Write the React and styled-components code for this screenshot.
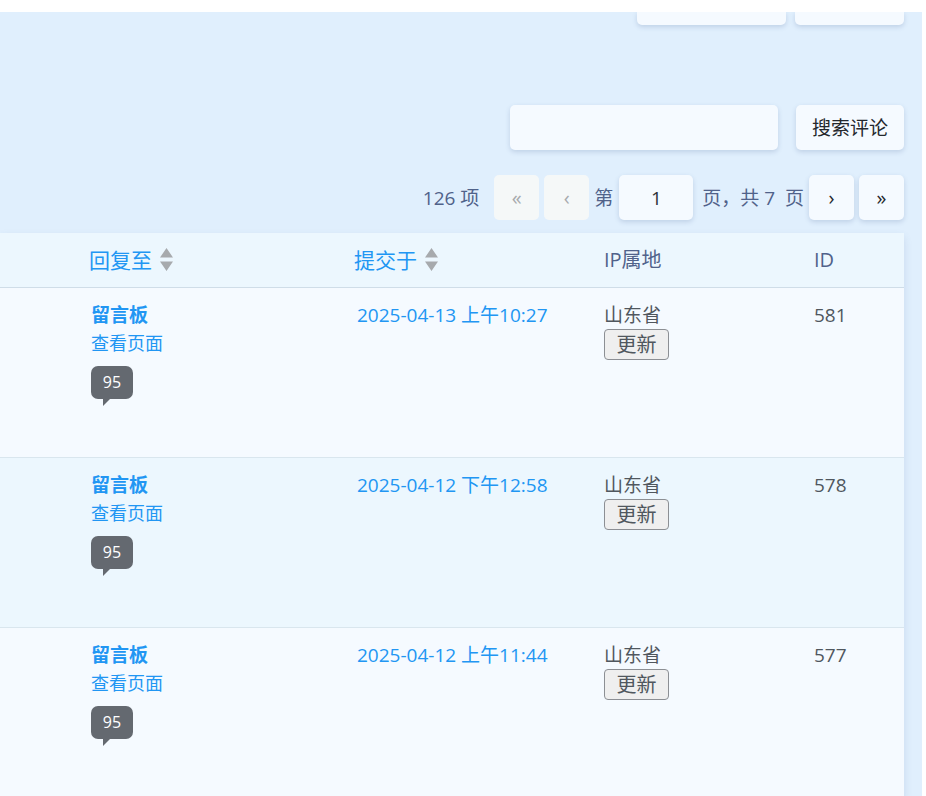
import React from "react";
import styled, { createGlobalStyle } from "styled-components";

const GlobalStyle = createGlobalStyle`
  *, *::before, *::after { box-sizing: border-box; }
  body {
    margin: 0;
    background: #fff;
    color: #50575e;
    font-family: "Open Sans", "Noto Sans CJK SC", sans-serif;
    font-size: 19px;
    line-height: 28px;
  }
  button, input { font: inherit; color: inherit; }
`;

const Page = styled.main`
  margin: 12px 4px 0 0;
  padding-right: 18px;
  min-height: calc(100vh - 12px);
  max-height: calc(100vh - 12px);
  overflow: hidden;
  background: #e0effd;
`;

const Toolbar = styled.div`
  display: flex;
  justify-content: flex-end;
  gap: ${(p) => p.$gap}px;
  margin-bottom: ${(p) => p.$after}px;
`;

const surface = `
  border: 0;
  border-radius: 5px;
  background: #f5faff;
  box-shadow: 0 2px 5px rgba(60, 90, 140, 0.2);
`;

const ScreenTab = styled.button`
  ${surface}
  width: ${(p) => p.$width}px;
  height: 13px;
  border-radius: 0 0 5px 5px;
`;

const SearchInput = styled.input`
  ${surface}
  width: 268px;
  height: 45px;
  padding: 0 12px;
`;

const SearchButton = styled.button`
  ${surface}
  width: 108px;
  height: 45px;
  padding: 0;
  color: #24282d;
`;

const Pager = styled.nav`
  display: flex;
  justify-content: flex-end;
  align-items: center;
  gap: 5px;
  height: 45px;
  margin-bottom: 13px;
  color: #50628a;
`;

const Total = styled.span`
  margin-right: 10px;
`;

const PageButton = styled.button`
  ${surface}
  width: 45px;
  height: 45px;
  padding: 0;
  color: #24282d;
  font-size: 20px;
  &:disabled {
    color: #a7aaad;
    background: #f5f8f8;
    box-shadow: none;
  }
`;

const PageLabel = styled.label`
  width: 20px;
`;

const PageInput = styled.input`
  ${surface}
  width: 74px;
  height: 45px;
  padding: 0;
  text-align: center;
  color: #2c3338;
`;

const PageCount = styled.span`
  padding-left: 4px;
  white-space: pre;
`;

const Table = styled.table`
  width: 100%;
  table-layout: fixed;
  border-collapse: separate;
  border-spacing: 0;
  background: #f5faff;
  box-shadow: 0 4px 8px rgba(60, 90, 140, 0.14);
`;

const Col = styled.col`
  width: ${(p) => (p.$width ? `${p.$width}px` : "auto")};
`;

const HeadCell = styled.th`
  height: 55px;
  padding: 0 0 0 ${(p) => p.$inset}px;
  border-bottom: 1px solid #cfdde8;
  background: #ecf7fe;
  color: #50628a;
  font-size: ${(p) => (p.$sortable ? 21 : 20)}px;
  font-weight: 400;
  text-align: left;
`;

const SortLink = styled.a`
  display: flex;
  align-items: center;
  gap: 8px;
  color: #2196f3;
  text-decoration: none;
`;

const SortIcon = styled.svg`
  display: block;
  width: 13px;
  height: 23px;
  margin-bottom: 2px;
  fill: #a7aaad;
`;

const Row = styled.tr`
  background: #f5faff;
  &:nth-child(even) { background: #ecf7fe; }
`;

const Cell = styled.td`
  height: 170px;
  padding: 13px 0 0 ${(p) => p.$inset}px;
  border-bottom: 1px solid #d9e6ee;
  vertical-align: top;
`;

const Link = styled.a`
  display: block;
  width: fit-content;
  color: #2196f3;
  font-weight: ${(p) => (p.$strong ? 700 : 400)};
  font-size: ${(p) => (p.$small ? 18 : 19)}px;
  text-decoration: none;
`;

const Bubble = styled.a`
  position: relative;
  display: block;
  width: 42px;
  height: 33px;
  margin-top: 9px;
  border-radius: 7px;
  background: #646970;
  color: #fff;
  font-size: 16px;
  line-height: 32px;
  text-align: center;
  text-decoration: none;
  &::after {
    content: "";
    position: absolute;
    top: 33px;
    left: 12px;
    border-top: 7px solid #646970;
    border-right: 7px solid transparent;
  }
`;

const UpdateButton = styled.button`
  display: block;
  width: 65px;
  height: 31px;
  padding: 0;
  border: 1px solid #8c8f94;
  border-radius: 4px;
  background: #efefef;
  font-size: 20px;
  line-height: 28px;
`;

const comments = [
  { id: 581, date: "2025-04-13 上午10:27" },
  { id: 578, date: "2025-04-12 下午12:58" },
  { id: 577, date: "2025-04-12 上午11:44" },
];

function SortLabel({ children }) {
  return (
    <SortLink href="#sort">
      {children}
      <SortIcon viewBox="0 0 13 23" aria-hidden="true">
        <path d="M6.5 0 13 9.5H0ZM0 13.5h13L6.5 23Z" />
      </SortIcon>
    </SortLink>
  );
}

export default function App() {
  return (
    <>
      <GlobalStyle />
      <Page>
        <Toolbar $gap={9} $after={80}>
          <ScreenTab $width={149} aria-label="显示选项" />
          <ScreenTab $width={109} aria-label="帮助" />
        </Toolbar>
        <Toolbar as="form" $gap={18} $after={25}>
          <SearchInput type="search" aria-label="搜索评论" />
          <SearchButton type="button">搜索评论</SearchButton>
        </Toolbar>
        <Pager aria-label="分页">
          <Total>126 项</Total>
          <PageButton disabled aria-label="首页">«</PageButton>
          <PageButton disabled aria-label="上一页">‹</PageButton>
          <PageLabel htmlFor="page">第</PageLabel>
          <PageInput id="page" defaultValue="1" />
          <PageCount>页，共 7  页</PageCount>
          <PageButton aria-label="下一页">›</PageButton>
          <PageButton aria-label="尾页">»</PageButton>
        </Pager>
        <Table>
          <colgroup>
            <Col />
            <Col $width={251} />
            <Col $width={210} />
            <Col $width={100} />
          </colgroup>
          <thead>
            <tr>
              <HeadCell $inset={89} $sortable><SortLabel>回复至</SortLabel></HeadCell>
              <HeadCell $inset={11} $sortable><SortLabel>提交于</SortLabel></HeadCell>
              <HeadCell $inset={10}>IP属地</HeadCell>
              <HeadCell $inset={10}>ID</HeadCell>
            </tr>
          </thead>
          <tbody>
            {comments.map((c) => (
              <Row key={c.id}>
                <Cell $inset={91}>
                  <Link href="#post" $strong>留言板</Link>
                  <Link href="#view" $small>查看页面</Link>
                  <Bubble href="#comments">95</Bubble>
                </Cell>
                <Cell $inset={14}><Link href="#comment">{c.date}</Link></Cell>
                <Cell $inset={10}>
                  山东省
                  <UpdateButton type="button">更新</UpdateButton>
                </Cell>
                <Cell $inset={10}>{c.id}</Cell>
              </Row>
            ))}
          </tbody>
        </Table>
      </Page>
    </>
  );
}
